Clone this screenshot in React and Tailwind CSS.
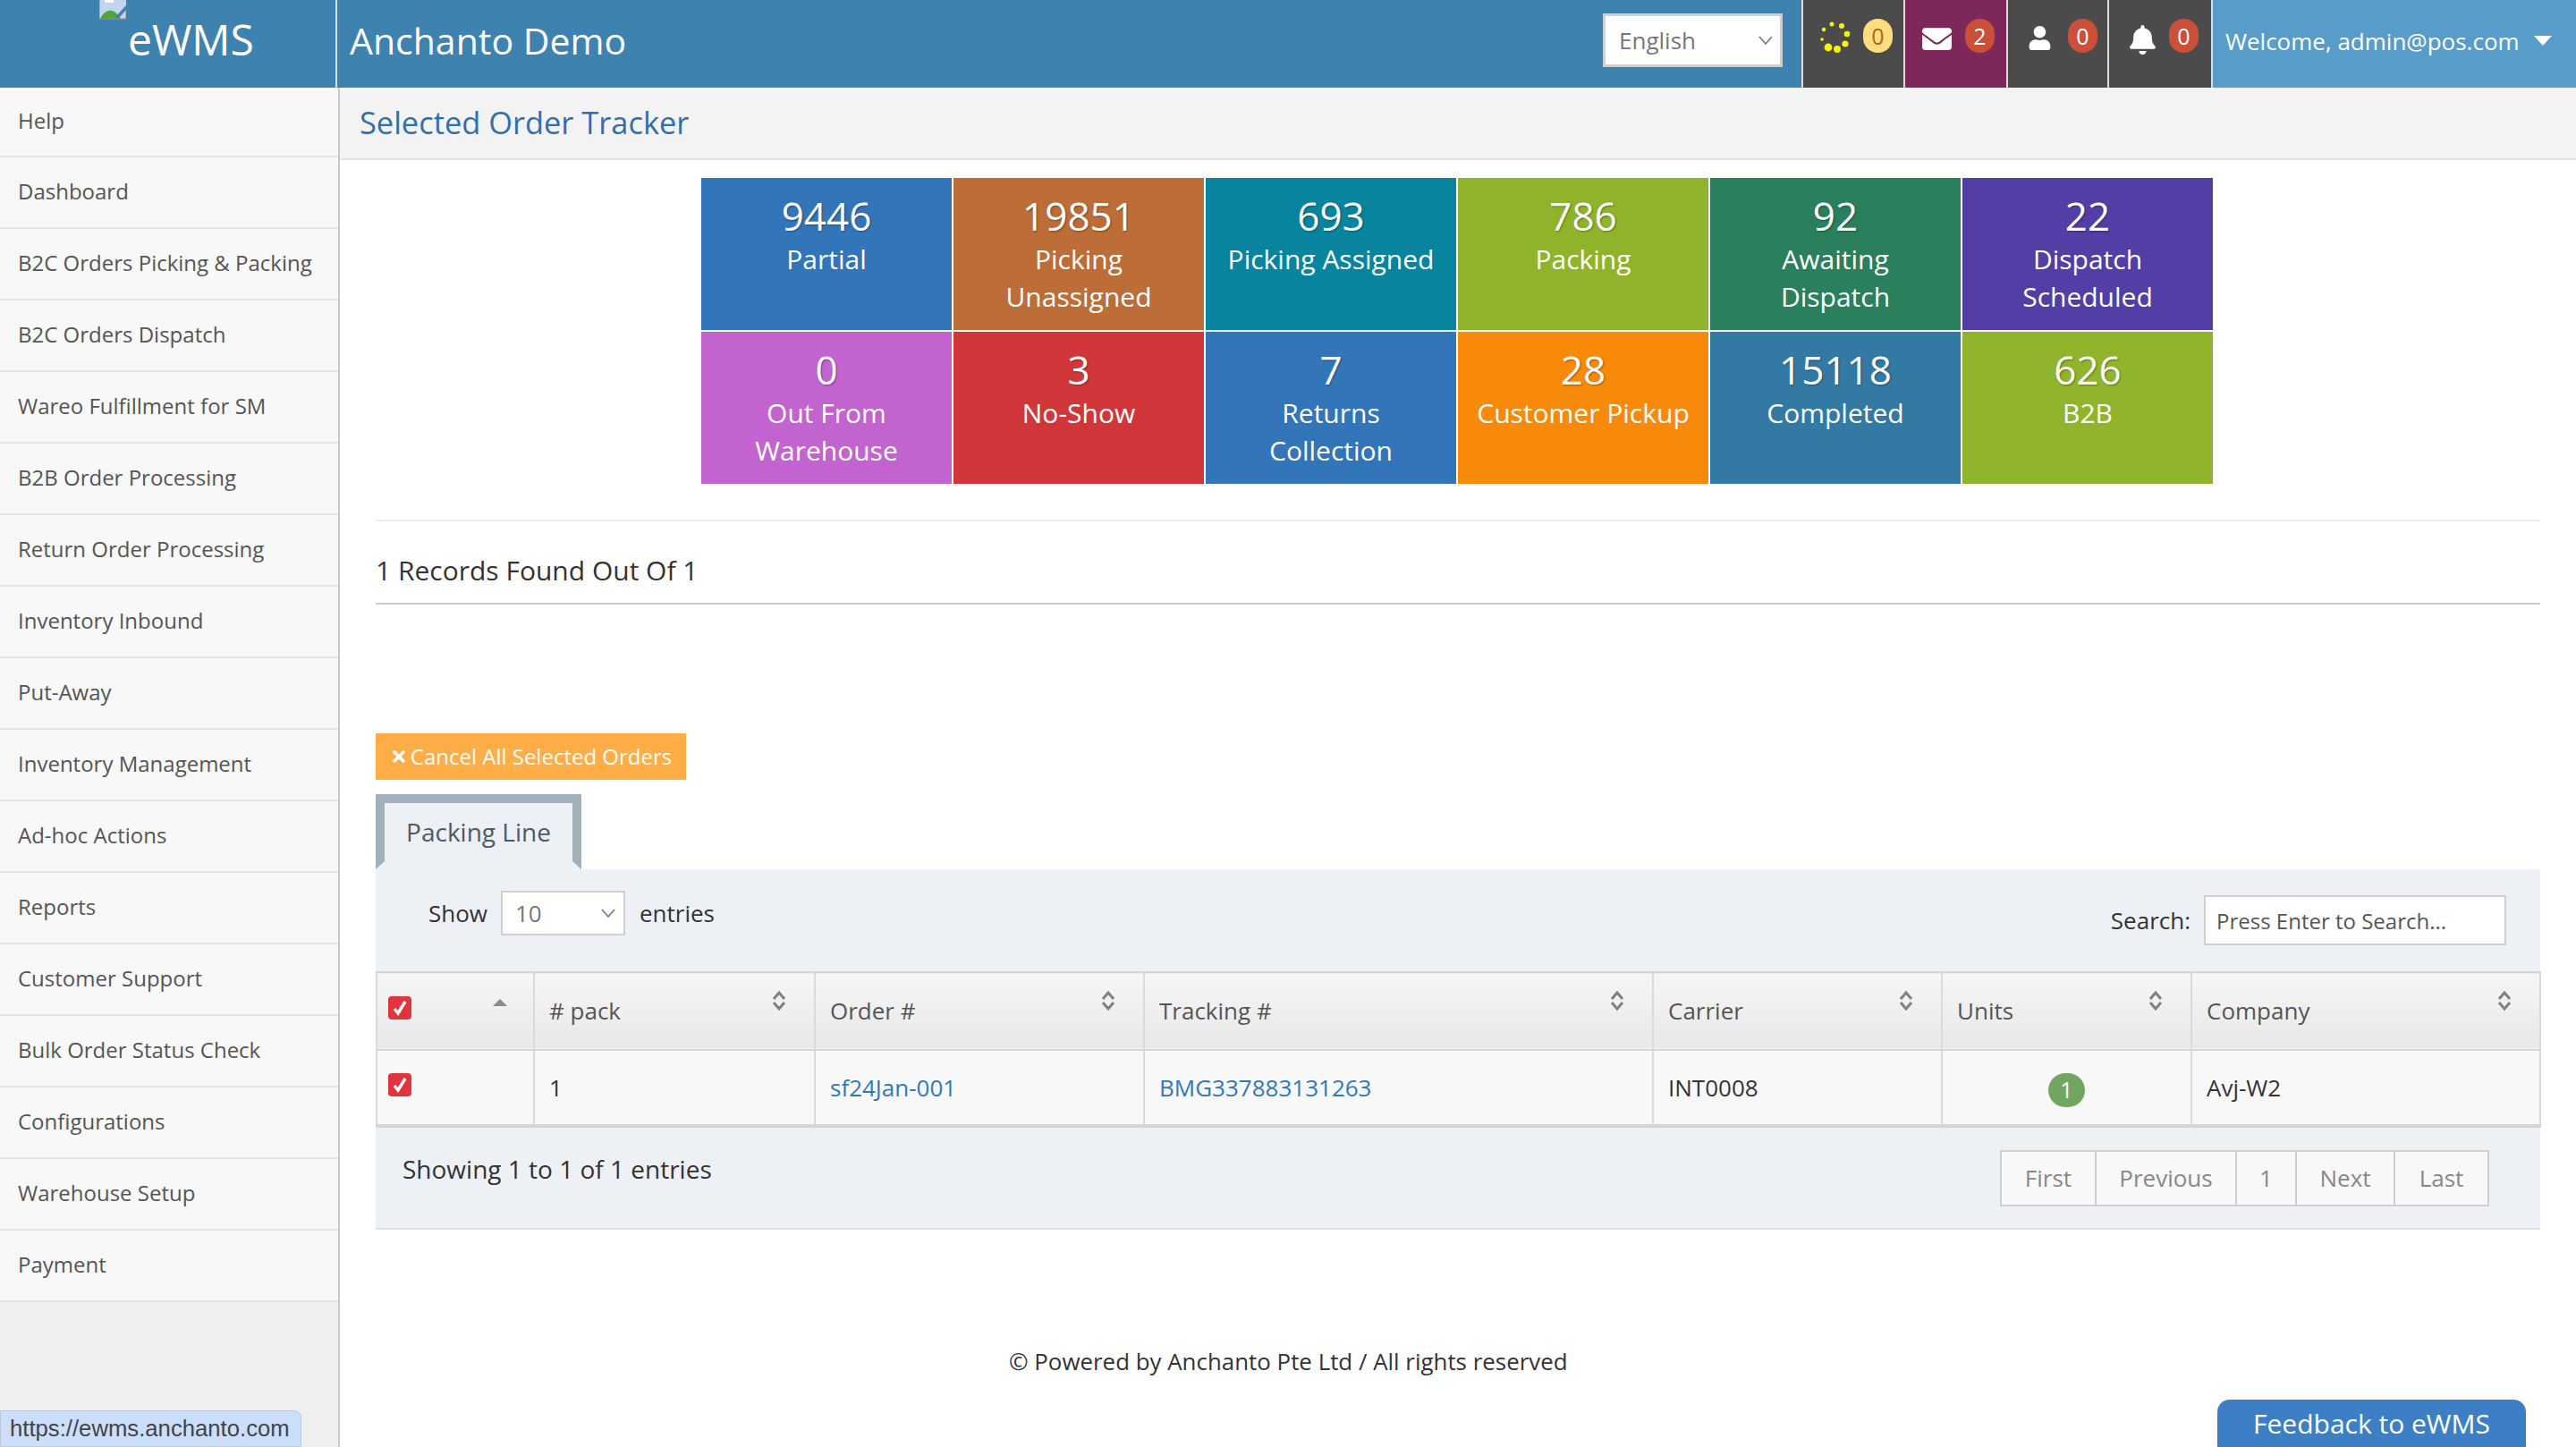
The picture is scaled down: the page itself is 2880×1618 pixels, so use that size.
import React from 'react';
import { FaEnvelope, FaUser, FaBell, FaTimes } from 'react-icons/fa';

const menu = [
  'Help', 'Dashboard', 'B2C Orders Picking & Packing', 'B2C Orders Dispatch', 'Wareo Fulfillment for SM',
  'B2B Order Processing', 'Return Order Processing', 'Inventory Inbound', 'Put-Away', 'Inventory Management',
  'Ad-hoc Actions', 'Reports', 'Customer Support', 'Bulk Order Status Check', 'Configurations',
  'Warehouse Setup', 'Payment',
];

const tiles = [
  { n: '9446', label: ['Partial'], bg: 'bg-[#3375b9]' },
  { n: '19851', label: ['Picking', 'Unassigned'], bg: 'bg-[#bc6d38]' },
  { n: '693', label: ['Picking Assigned'], bg: 'bg-[#09849e]' },
  { n: '786', label: ['Packing'], bg: 'bg-[#8fb42b]' },
  { n: '92', label: ['Awaiting', 'Dispatch'], bg: 'bg-[#2a7f5c]' },
  { n: '22', label: ['Dispatch', 'Scheduled'], bg: 'bg-[#533ea6]' },
  { n: '0', label: ['Out From', 'Warehouse'], bg: 'bg-[#c263cf]' },
  { n: '3', label: ['No-Show'], bg: 'bg-[#d1373a]' },
  { n: '7', label: ['Returns', 'Collection'], bg: 'bg-[#3375b9]' },
  { n: '28', label: ['Customer Pickup'], bg: 'bg-[#f78a0a]' },
  { n: '15118', label: ['Completed'], bg: 'bg-[#327aa3]' },
  { n: '626', label: ['B2B'], bg: 'bg-[#90b42b]' },
];

const spinnerDots = [
  [13, 3, 2.5], [24, 5, 3], [30, 14, 3.3], [28, 25, 3.6], [19, 31, 4], [9, 29, 4.4], [2, 20, 1.8], [4, 9, 2.2],
];

const Chevron = () => (
  <svg width="16" height="10" viewBox="0 0 16 10" fill="none" stroke="#777" strokeWidth="1.6">
    <path d="M1 1l7 8 7-8" />
  </svg>
);

const Checkbox = () => (
  <span className="flex h-[26px] w-[26px] items-center justify-center rounded-[4px] bg-[#e0353f]">
    <svg width="16" height="18" viewBox="0 0 16 18" fill="none" stroke="#fff" strokeWidth="3.4">
      <path d="M2 10l4 5 8-13" />
    </svg>
  </span>
);

// petites flèches de tri dans l'entête du tableau
const SortIcon = () => (
  <svg width="16" height="22" viewBox="0 0 16 22" fill="none" stroke="#808080" strokeWidth="3">
    <path d="M2 9l6-7 6 7" />
    <path d="M2 13l6 7 6-7" />
  </svg>
);

const Badge = ({ children, color }) => (
  <span className={`mt-[21px] flex h-[38px] w-[33px] items-center justify-center rounded-full text-[25px] leading-none ${color}`}>
    {children}
  </span>
);

const NavTile = ({ width, bg, icon, badge, badgeColor }) => (
  <div className={`flex h-full border-l-2 border-[#dcdcdc] pl-[19px] ${width} ${bg}`}>
    <div className="flex w-[48px] items-start pt-[24px]">{icon}</div>
    <Badge color={badgeColor}>{badge}</Badge>
  </div>
);

const Header = () => (
  <header className="flex h-[98px] w-full shrink-0 bg-[#3e82b0] text-white">
    <div className="relative w-[375px] shrink-0 border-r-2 border-[#d5e3ed] box-content">
      <svg className="absolute left-[111px] top-0" width="30" height="22" viewBox="0 0 30 22">
        <rect x="0" y="0" width="30" height="21" fill="#c3d5ee" />
        <rect x="6" y="0" width="10" height="3" fill="#fff" />
        <path d="M1 21c3-7 9-10 13-9 4 1 8 5 10 9z" fill="#4da837" />
        <path d="M16 21L30 6v5l-9 10z" fill="#3e82b0" />
        <path d="M0 21V0M30 21V12M0 21h30" stroke="#9a8f7d" strokeWidth="1" />
      </svg>
      <span className="absolute left-[143px] top-[14px] text-[48px] leading-[60px]">eWMS</span>
    </div>
    <div className="flex flex-1 items-center pb-[9px] pl-[14px]">
      <span className="text-[41px] leading-[52px]">Anchanto Demo</span>
    </div>
    <div className="mr-[21px] mt-[15px] flex h-[60px] w-[201px] items-center justify-between border-[3px] border-[#cfcfcf] bg-white pl-[15px] pr-[8px] text-[#777]">
      <span className="text-[26px]">English</span>
      <Chevron />
    </div>
    <div className="flex h-full">
      <NavTile
        width="w-[114px]"
        bg="bg-[#4b4b4b]"
        badge="0"
        badgeColor="bg-[#ffdc7c] text-[#a5682a]"
        icon={
          <svg width="34" height="36" viewBox="0 0 34 36" fill="#f6f600">
            {spinnerDots.map(([cx, cy, r]) => <circle key={cx + '-' + cy} cx={cx} cy={cy} r={r} />)}
          </svg>
        }
      />
      <NavTile
        width="w-[115px]"
        bg="bg-[#7d2858]"
        badge="2"
        badgeColor="bg-[#cb503a] text-white"
        icon={<FaEnvelope className="mt-[3px] text-[33px]" />}
      />
      <NavTile
        width="w-[113px]"
        bg="bg-[#4b4b4b]"
        badge="0"
        badgeColor="bg-[#cb503a] text-white"
        icon={<FaUser className="mt-[5px] ml-[3px] text-[27px]" />}
      />
      <NavTile
        width="w-[116px]"
        bg="bg-[#4b4b4b]"
        badge="0"
        badgeColor="bg-[#cb503a] text-white"
        icon={<FaBell className="mt-[4px] ml-[2px] text-[33px]" />}
      />
    </div>
    <div className="flex h-full w-[408px] items-center justify-between border-l-2 border-[#dcdcdc] bg-[#589dca] pb-[6px] pl-[14px] pr-[27px]">
      <span className="text-[26px]">Welcome, admin@pos.com</span>
      <span className="mb-[2px] h-0 w-0 border-x-[10px] border-t-[11px] border-x-transparent border-t-white" />
    </div>
  </header>
);

const Sidebar = () => (
  <aside className="h-full w-[380px] shrink-0 border-r-2 border-[#c8c8c8] bg-[#efefef]">
    {menu.map((item, i) => (
      <div
        key={item}
        className={`flex items-center border-b-2 border-[#e3e3e3] bg-[#f8f8f8] pb-[2px] pl-[20px] text-[24px] text-[#555] ${i === 0 ? 'h-[78px]' : 'h-[80px]'}`}
      >
        {item}
      </div>
    ))}
  </aside>
);

const TileGrid = () => (
  <div className="ml-[404px] mt-[20px] grid w-[1690px] grid-cols-6 gap-[2px]">
    {tiles.map((t) => (
      <div key={t.n + t.label[0]} className={`h-[170px] pt-[16px] text-center text-white ${t.bg}`}>
        <div className="mb-[2px] text-[44px] leading-[52px] [text-shadow:1px_1px_2px_rgba(0,0,0,0.35)]">{t.n}</div>
        {t.label.map((l) => (
          <div key={l} className="text-[30px] leading-[42px]">{l}</div>
        ))}
      </div>
    ))}
  </div>
);

const columns = [
  { label: '', w: 'w-[176px]' },
  { label: '# pack', w: 'w-[314px]' },
  { label: 'Order #', w: 'w-[368px]' },
  { label: 'Tracking #', w: 'w-[569px]' },
  { label: 'Carrier', w: 'w-[323px]' },
  { label: 'Units', w: 'w-[279px]' },
  { label: 'Company', w: 'w-[390px]' },
];

const OrdersTable = () => (
  <table className="w-[2419px] table-fixed border-collapse text-[26px]">
    <thead>
      <tr className="h-[87px] border-y-2 border-[#d5d5d5] bg-gradient-to-b from-[#f6f6f6] to-[#e8e8e8] text-[#555]">
        {columns.map((c, i) => (
          <th key={c.label} className={`relative border-x-2 border-[#dadada] pl-[16px] text-left font-normal ${c.w}`}>
            {i === 0 ? (
              <>
                <div className="-mt-[8px] -ml-[4px]"><Checkbox /></div>
                <span className="absolute right-[29px] top-[29px] h-0 w-0 border-x-[8px] border-b-[8px] border-x-transparent border-b-[#8a8a8a]" />
              </>
            ) : (
              <>
                <span className="pt-[4px]">{c.label}</span>
                <span className="absolute right-[31px] top-[20px]"><SortIcon /></span>
              </>
            )}
          </th>
        ))}
      </tr>
    </thead>
    <tbody>
      <tr className="h-[85px] border-b-4 border-[#d5d5d5] bg-[#f8f8f8] text-[#333]">
        <td className="border-x-2 border-[#dadada] pl-[12px]">
          <div className="-mt-[6px]"><Checkbox /></div>
        </td>
        <td className="border-x-2 border-[#dadada] pl-[16px]">1</td>
        <td className="border-x-2 border-[#dadada] pl-[16px] text-[#2f78bd]">sf24Jan-001</td>
        <td className="border-x-2 border-[#dadada] pl-[16px] text-[#2f78bd]">BMG337883131263</td>
        <td className="border-x-2 border-[#dadada] pl-[16px]">INT0008</td>
        <td className="border-x-2 border-[#dadada]">
          <span className="mx-auto mt-[5px] flex h-[38px] w-[41px] items-center justify-center rounded-full bg-[#71a660] text-[25px] text-white">1</span>
        </td>
        <td className="border-x-2 border-[#dadada] pl-[16px]">Avj-W2</td>
      </tr>
    </tbody>
  </table>
);

const pages = [
  { label: 'First', w: 'w-[104px]' },
  { label: 'Previous', w: 'w-[157px]' },
  { label: '1', w: 'w-[67px]' },
  { label: 'Next', w: 'w-[110px]' },
  { label: 'Last', w: 'w-[105px]' },
];

const Panel = () => (
  <>
    {/* onglet : la bordure basse couleur panneau donne le biseau des côtés */}
    <div className="mt-[16px] flex h-[84px] w-[230px] items-start justify-center border-x-[10px] border-b-[9px] border-t-[10px] border-x-[#a1b1bb] border-b-[#edf0f5] border-t-[#a1b1bb] bg-[#edf0f5] pt-[12px]">
      <span className="text-[28px] leading-[40px] text-[#4e5a66]">Packing Line</span>
    </div>
    <div className="h-[403px] border-b-2 border-[#dcdfe3] bg-[#edf0f5]">
      <div className="flex h-[114px] justify-between text-[26px] text-[#333]">
        <div className="flex items-center pb-[16px] pl-[59px]">
          <span>Show</span>
          <div className="ml-[15px] flex h-[50px] w-[139px] items-center justify-between border-2 border-[#cfcfcf] bg-white pl-[14px] pr-[9px] text-[#777]">
            <span>10</span>
            <Chevron />
          </div>
          <span className="ml-[16px]">entries</span>
        </div>
        <div className="flex items-center pr-[38px]">
          <span>Search:</span>
          <input
            className="ml-[15px] h-[56px] w-[338px] border-2 border-[#cfcfcf] bg-white pl-[12px] text-[24px] text-[#444] outline-none placeholder:text-[#555]"
            placeholder="Press Enter to Search..."
          />
        </div>
      </div>
      <OrdersTable />
      <div className="flex justify-between pl-[30px] pr-[57px] pt-[25px]">
        <span className="pt-[1px] text-[28px] leading-[40px] text-[#333]">Showing 1 to 1 of 1 entries</span>
        <div className="flex h-[63px] border-2 border-[#cfcfcf] bg-[#f8f8f8] text-[26px] text-[#888]">
          {pages.map((p, i) => (
            <span key={p.label} className={`flex items-center justify-center ${p.w} ${i > 0 ? 'border-l-2 border-[#cfcfcf]' : ''}`}>
              {p.label}
            </span>
          ))}
        </div>
      </div>
    </div>
  </>
);

export default function App() {
  return (
    <div className="relative flex h-[1618px] w-[2880px] flex-col overflow-hidden bg-white font-['Open_Sans',sans-serif]">
      <Header />
      <div className="flex min-h-0 flex-1">
        <Sidebar />
        <main className="min-w-0 flex-1">
          <div className="flex h-[81px] items-center border-b-2 border-[#e3e3e3] bg-[#f3f3f3] pb-[2px] pl-[22px]">
            <h1 className="text-[34.4px] font-normal text-[#2f6fb0]">Selected Order Tracker</h1>
          </div>
          <TileGrid />
          <div className="mx-[40px]">
            <div className="mt-[40px] border-t-2 border-[#eeeeee]" />
            <div className="flex h-[93px] items-center border-b-2 border-[#cccccc] pt-[18px] text-[30px] text-[#333]">
              1 Records Found Out Of 1
            </div>
            <button className="mt-[144px] flex h-[52px] w-[347px] items-center justify-center gap-[3px] bg-[#ffad46] text-[24px] text-white">
              <FaTimes className="text-[20px]" />
              Cancel All Selected Orders
            </button>
            <Panel />
          </div>
          <p className="mt-[127px] pl-[748px] text-[25.9px] leading-[40px] text-[#333]">
            © Powered by Anchanto Pte Ltd / All rights reserved
          </p>
        </main>
      </div>
      {/* éléments flottants en bas de page */}
      <div className="absolute bottom-0 left-0 flex h-[41px] w-[337px] items-center rounded-tr-[8px] border border-[#bcc8d8] bg-[#cbdffc] pl-[10px] font-['Liberation_Sans',sans-serif] text-[25.7px] text-[#444]">
        https://ewms.anchanto.com
      </div>
      <div className="absolute bottom-0 left-[2479px] flex h-[53px] w-[345px] items-center justify-center rounded-t-[14px] bg-[#3d7fc4] text-[30px] text-white">
        Feedback to eWMS
      </div>
    </div>
  );
}
